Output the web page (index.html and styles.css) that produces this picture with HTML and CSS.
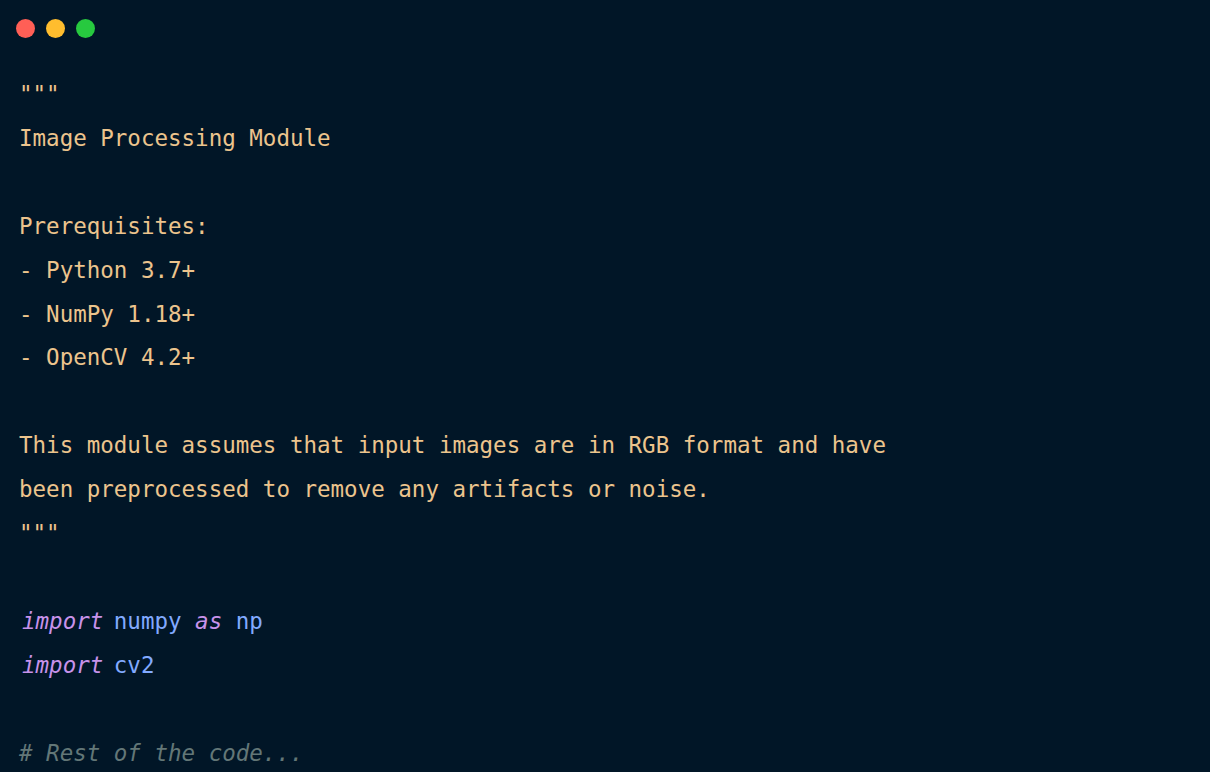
FILE: index.html
```html
<!DOCTYPE html>
<html>
<head>
<meta charset="utf-8">
<link rel="stylesheet" href="styles.css">
</head>
<body>
<div class="window">
  <div class="titlebar">
    <span class="dot red"></span>
    <span class="dot yellow"></span>
    <span class="dot green"></span>
  </div>
  <pre class="code"><span class="str">"""
Image Processing Module

Prerequisites:
- Python 3.7+
- NumPy 1.18+
- OpenCV 4.2+

This module assumes that input images are in RGB format and have
been preprocessed to remove any artifacts or noise.
"""</span>

<span class="kw lead">import</span> <span class="mod">numpy</span> <span class="kw">as</span> <span class="mod">np</span>
<span class="kw lead">import</span> <span class="mod">cv2</span>

<span class="cm"># Rest of the code...</span></pre>
</div>
</body>
</html>
```

FILE: styles.css
```css
html, body {
  margin: 0;
  padding: 0;
  background: #011627;
}
.window {
  width: 1210px;
  height: 772px;
  overflow: hidden;
  background: #011627;
}
.titlebar {
  display: flex;
  gap: 11px;
  padding: 19px 0 0 16px;
  height: 19px;
}
.dot {
  width: 19px;
  height: 19px;
  border-radius: 50%;
  display: block;
}
.red { background: #ff5f56; }
.yellow { background: #ffbd2e; }
.green { background: #27c93f; }
.code {
  margin: 0;
  padding: 35px 0 0 19px;
  font-family: "DejaVu Sans Mono", monospace;
  font-size: 22.5px;
  line-height: 43.9px;
  color: #ecc48d;
  white-space: pre;
}
.str { color: #ecc48d; }
.kw { color: #c792ea; font-style: italic; }
.lead { padding-left: 3px; margin-right: -3px; }
.mod { color: #82aaff; }
.cm { color: #637777; font-style: italic; }
```
